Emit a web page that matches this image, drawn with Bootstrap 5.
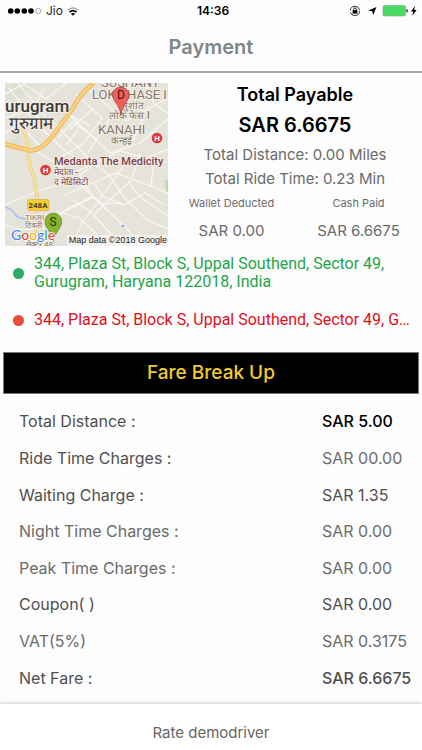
<!DOCTYPE html>
<html lang="en">
<head>
<meta charset="utf-8">
<meta name="viewport" content="width=device-width, initial-scale=1">
<title>Payment</title>
<link href="https://cdn.jsdelivr.net/npm/bootstrap@5.3.0/dist/css/bootstrap.min.css" rel="stylesheet">
<style>
  body { font-family: Inter, "Noto Sans", sans-serif; font-size: 15px; line-height: 18px; color: #6b6b6b; background: #fdfdfd; }
  .status-bar { height: 22px; font-size: 12px; color: #222; }
  .status-time { color: #000; font-weight: 600; }
  .app-header { height: 51px; border-bottom: 2px solid #a5a5a5; }
  .app-header h1 { font-size: 20px; line-height: 24px; font-weight: 600; color: #7d8688; }
  .summary { padding: 10px 0 0 5px; }
  .route-map { width: 163px; height: 163px; }
  .total-title { font-size: 18px; line-height: 24px; font-weight: 600; color: #000; }
  .total-amount { font-size: 20px; line-height: 36px; font-weight: 600; color: #000; }
  .trip-line { line-height: 24px; }
  .pay-label { font-size: 11px; line-height: 24px; }
  .pay-value { line-height: 32px; }
  .stop-row { padding: 0 5px 0 13px; gap: 10px; font-family: Roboto, sans-serif; font-size: 16px; }
  .stop-dot { width: 11px; height: 11px; }
  .pickup { color: #1fa548; margin-top: 8px; }
  .pickup .stop-dot { background: #27ae60; }
  .dropoff { color: #e00f1c; margin-top: 20px; }
  .dropoff .stop-dot { background: #e74c3c; }
  .fare-title { margin: 23px 3px 0; height: 42px; font-size: 19px; font-weight: 500; color: #f2cc2e; border: 1px solid #777; }
  .fare-table { height: 293px; margin-top: 9px; font-size: 16px; }
  .fare-table th { padding-left: 19px; font-weight: 400; }
  .fare-table td { width: 101px; white-space: nowrap; }
  .fare-table .tone-dark { color: #505050; }
  .fare-table .tone-black { color: #000; font-weight: 500; }
  .fare-table .tone-net { color: #505050; font-weight: 500; }
  .rate-bar { height: 46px; padding-top: 12px; background: #fff; box-shadow: 0 -1px 3px rgba(0,0,0,.2); }
  .rate-btn { color: #666; font-size: 15px; line-height: 18px; }
</style>
</head>
<body class="d-flex flex-column min-vh-100">

<div class="status-bar row g-0 align-items-center ps-2 pe-1">
  <div class="col d-flex align-items-center gap-1">
    <svg width="34" height="8" viewBox="0 0 34 8" aria-hidden="true">
      <g fill="#000"><circle cx="2.700" cy="4" r="2.800"/><circle cx="9.300" cy="4" r="2.800"/><circle cx="16.300" cy="4" r="2.800"/><circle cx="23" cy="4" r="2.800"/></g>
      <circle cx="30.300" cy="4" r="2.600" fill="none" stroke="#888" stroke-width=".7"/>
    </svg>
    <span>Jio</span>
    <svg width="12" height="9" viewBox="0 0 12 9" fill="none" aria-hidden="true">
      <path d="M.7 3.200Q6-1.600 11.300 3.200" stroke="#999" stroke-width="1.200"/>
      <path d="M2.500 5.100Q6 2.100 9.500 5.100" stroke="#000" stroke-width="1.500"/>
      <path d="M4 6.700Q6 5 8 6.700L6 8.800Z" fill="#000"/>
    </svg>
  </div>
  <div class="col-auto status-time">14:36</div>
  <div class="col d-flex align-items-center justify-content-end">
    <svg width="68" height="12" viewBox="350 5 68 12" aria-hidden="true">
      <circle cx="355" cy="11" r="4.700" fill="none" stroke="#222" stroke-width=".9" stroke-dasharray="13 1.700"/>
      <path d="M353.700 10.500V9.200a1.300 1.300 0 0 1 2.600 0V10.500" fill="none" stroke="#000" stroke-width=".9"/>
      <rect x="352.600" y="10.200" width="4.800" height="3.400" fill="#000"/>
      <path d="M376.500 7L373.200 15L372.200 11.300L368.300 10.500Z" fill="#000"/>
      <rect x="383" y="5.500" width="22.500" height="10.500" rx="1.500" fill="#4cd964" stroke="#7bab82" stroke-width=".6"/>
      <path d="M406.300 9Q408 9.300 408 10.800T406.300 12.600Z" fill="#333"/>
      <path d="M415 6L411 11.400H413.200L412.200 15.700L416.600 9.900H414.200Z" fill="#000"/>
    </svg>
  </div>
</div>

<header class="app-header d-flex align-items-center justify-content-center">
  <h1 class="m-0">Payment</h1>
</header>

<main class="flex-grow-1">
  <section class="summary d-flex">
    <svg class="route-map flex-shrink-0" viewBox="5 83 163 163" role="img" aria-label="Route map" font-family="Roboto, sans-serif">
      <rect x="5" y="83" width="163" height="163" fill="#e6e3db"/>
      <path d="M5 87L15 83H35L22 97L5 101ZM6 147L18 134L22 140L14 149Z" fill="#dce2d0"/>
      <path d="M165 181L168 180V192H166Z" fill="#b9dc96"/>
      <g fill="none" stroke="#f8f7f3" stroke-width="1.200">
        <path d="M5 94L24 84L46 99L66 83M8 87L30 115L44 89M18 83L46 118M5 118L28 111L56 129M5 133L20 125L41 147M34 121L61 147L88 168M49 118L98 168M62 108L110 153L140 143L168 119M76 94L102 118L83 144L55 161M88 89L126 121L168 98M94 108L70 129M110 118L88 153M126 83L144 115L130 148M145 83L154 104L168 113M70 115L91 126M58 138L73 122L96 139M66 145L78 130M38 152L72 173L94 164"/>
        <path d="M5 205L38 191L72 181L96 163L120 151L146 158L168 149M79 173L93 197L124 226L143 246M65 195L90 184L116 173L168 193M97 164L112 179L123 196L146 219L168 229M125 164L102 196L82 223L72 246M140 153L131 181L95 213M73 200L92 213L112 235M102 196L124 205L145 193L165 205M77 182L102 204L121 203M57 211L80 218L101 239M5 225L25 230L45 228M95 184L102 195M128 181L139 196L168 216M154 158L151 186"/>
        <path d="M54 218L70 208L93 197" stroke-width="2"/>
      </g>
      <path d="M5 207Q12 209 15 214T27 219" fill="none" stroke="#a5bff2" stroke-width="1.600"/>
      <path d="M22 126Q27 136 28 149Q28 163 34 178L38 202L34 224L41 246" fill="none" stroke="#e8c66f" stroke-width="3.200"/>
      <path d="M22 126Q27 136 28 149Q28 163 34 178L38 202L34 224L41 246" fill="none" stroke="#fbe59d" stroke-width="2"/>
      <path d="M94 83Q81 92 73 108L51 138Q38 153 28 150L5 144" fill="none" stroke="#e5b158" stroke-width="4.600"/>
      <path d="M94 83Q81 92 73 108L51 138Q38 153 28 150L5 144" fill="none" stroke="#fad07a" stroke-width="3"/>
      <circle cx="123" cy="226" r="1.300" fill="#80a9e8"/>

      <g stroke="#f3f0e8" stroke-width="2" paint-order="stroke" stroke-linejoin="round">
        <g fill="#857665" font-weight="400" font-size="13">
          <text x="101" y="87">SUSHANT</text>
          <text x="92" y="99">LOK PHASE I</text>
          <text x="98" y="134">KANAHI</text>
          <g font-size="10" font-weight="500">
            <text x="121" y="109">सुशांत</text>
            <text x="109" y="119">लोक फेस I</text>
            <text x="111" y="144">कन्हई</text>
          </g>
          <text x="25" y="220" font-size="8">TIKRI</text>
          <text x="25" y="228" font-size="8">टिकरी</text>
          <text x="26" y="247" font-size="8">सेक्टर 48</text>
        </g>
        <g fill="#3c3935" font-weight="500">
          <text x="5" y="112" font-size="17">urugram</text>
          <text x="9" y="129" font-size="17">गुरुग्राम</text>
        </g>
        <g fill="#814047" font-weight="500">
          <text x="54" y="165" font-size="11">Medanta The Medicity</text>
          <text x="54" y="175" font-size="9">मेदांता -</text>
          <text x="54" y="185" font-size="9">द मेडिसिटी</text>
        </g>
      </g>

      <g font-weight="700" font-size="8" text-anchor="middle" fill="#fff">
        <circle cx="157" cy="138" r="5.300" fill="#d83b38"/><text x="157" y="141">H</text>
        <circle cx="45.500" cy="170" r="5.300" fill="#d83b38"/><text x="45.500" y="173">H</text>
      </g>
      <rect x="27.500" y="199.500" width="21.500" height="11" rx="2" fill="#f8cd2e" stroke="#c9a73f" stroke-width=".6"/>
      <text x="38" y="208" font-size="8" font-weight="700" text-anchor="middle" fill="#463f28">248A</text>

      <path d="M121 115C120 105 112.500 101 112.500 94.500A8.300 8.300 0 0 1 129 94.500C129 101 122 105 121 115Z" fill="#f0605a" stroke="#a83c37" stroke-width=".8"/>
      <text x="121" y="99" font-size="12" text-anchor="middle" fill="#401615">D</text>
      <path d="M53.500 242C53 233 45 228 45 221.500A8.300 8.300 0 0 1 61.700 221.500C61.700 228 54 233 53.500 242Z" fill="#86b52d" stroke="#638723" stroke-width=".8"/>
      <text x="53" y="226" font-size="12" text-anchor="middle" fill="#26330f">S</text>

      <rect x="67" y="235" width="101" height="11" fill="#f3f2ee"/>
      <text x="167" y="243" text-anchor="end" font-size="9" font-family="Liberation Sans, Arial, sans-serif" fill="#222">Map data ©2018 Google</text>
      <text x="11" y="240" font-size="14" font-weight="500" font-family="Lato, sans-serif" stroke="#fff" stroke-width="1.600" paint-order="stroke"><tspan fill="#4285f4">G</tspan><tspan fill="#ea4335">o</tspan><tspan fill="#f4b400">o</tspan><tspan fill="#4285f4">g</tspan><tspan fill="#34a853">l</tspan><tspan fill="#ea4335">e</tspan></text>
    </svg>

    <div class="flex-grow-1 text-center">
      <div class="total-title">Total Payable</div>
      <div class="total-amount">SAR 6.6675</div>
      <div class="trip-line">Total Distance: 0.00 Miles</div>
      <div class="trip-line">Total Ride Time: 0.23 Min</div>
      <div class="row g-0">
        <div class="col-6"><div class="pay-label">Wallet Deducted</div><div class="pay-value">SAR 0.00</div></div>
        <div class="col-6"><div class="pay-label">Cash Paid</div><div class="pay-value">SAR 6.6675</div></div>
      </div>
    </div>
  </section>

  <section>
    <div class="stop-row pickup d-flex align-items-center">
      <span class="stop-dot rounded-circle flex-shrink-0"></span>
      <span>344, Plaza St, Block S, Uppal Southend, Sector 49, Gurugram, Haryana 122018, India</span>
    </div>
    <div class="stop-row dropoff d-flex align-items-center">
      <span class="stop-dot rounded-circle flex-shrink-0"></span>
      <span class="text-truncate">344, Plaza St, Block S, Uppal Southend, Sector 49, Gurugram, Haryana 122018, India</span>
    </div>
  </section>

  <h2 class="fare-title bg-black d-flex align-items-center justify-content-center">Fare Break Up</h2>
  <table class="fare-table w-100">
    <tbody>
      <tr><th scope="row" class="tone-dark">Total Distance :</th><td class="tone-black">SAR 5.00</td></tr>
      <tr><th scope="row" class="tone-dark">Ride Time Charges :</th><td>SAR 00.00</td></tr>
      <tr><th scope="row" class="tone-dark">Waiting Charge :</th><td class="tone-dark">SAR 1.35</td></tr>
      <tr><th scope="row">Night Time Charges :</th><td>SAR 0.00</td></tr>
      <tr><th scope="row">Peak Time Charges :</th><td>SAR 0.00</td></tr>
      <tr><th scope="row" class="tone-dark">Coupon( )</th><td class="tone-dark">SAR 0.00</td></tr>
      <tr><th scope="row">VAT(5%)</th><td>SAR 0.3175</td></tr>
      <tr><th scope="row" class="tone-dark">Net Fare :</th><td class="tone-net">SAR 6.6675</td></tr>
    </tbody>
  </table>
</main>

<footer class="rate-bar text-center">
  <button type="button" class="rate-btn btn p-0 pt-2 border-0">Rate demodriver</button>
</footer>

<script src="https://cdn.jsdelivr.net/npm/bootstrap@5.3.0/dist/js/bootstrap.bundle.min.js"></script>
</body>
</html>
